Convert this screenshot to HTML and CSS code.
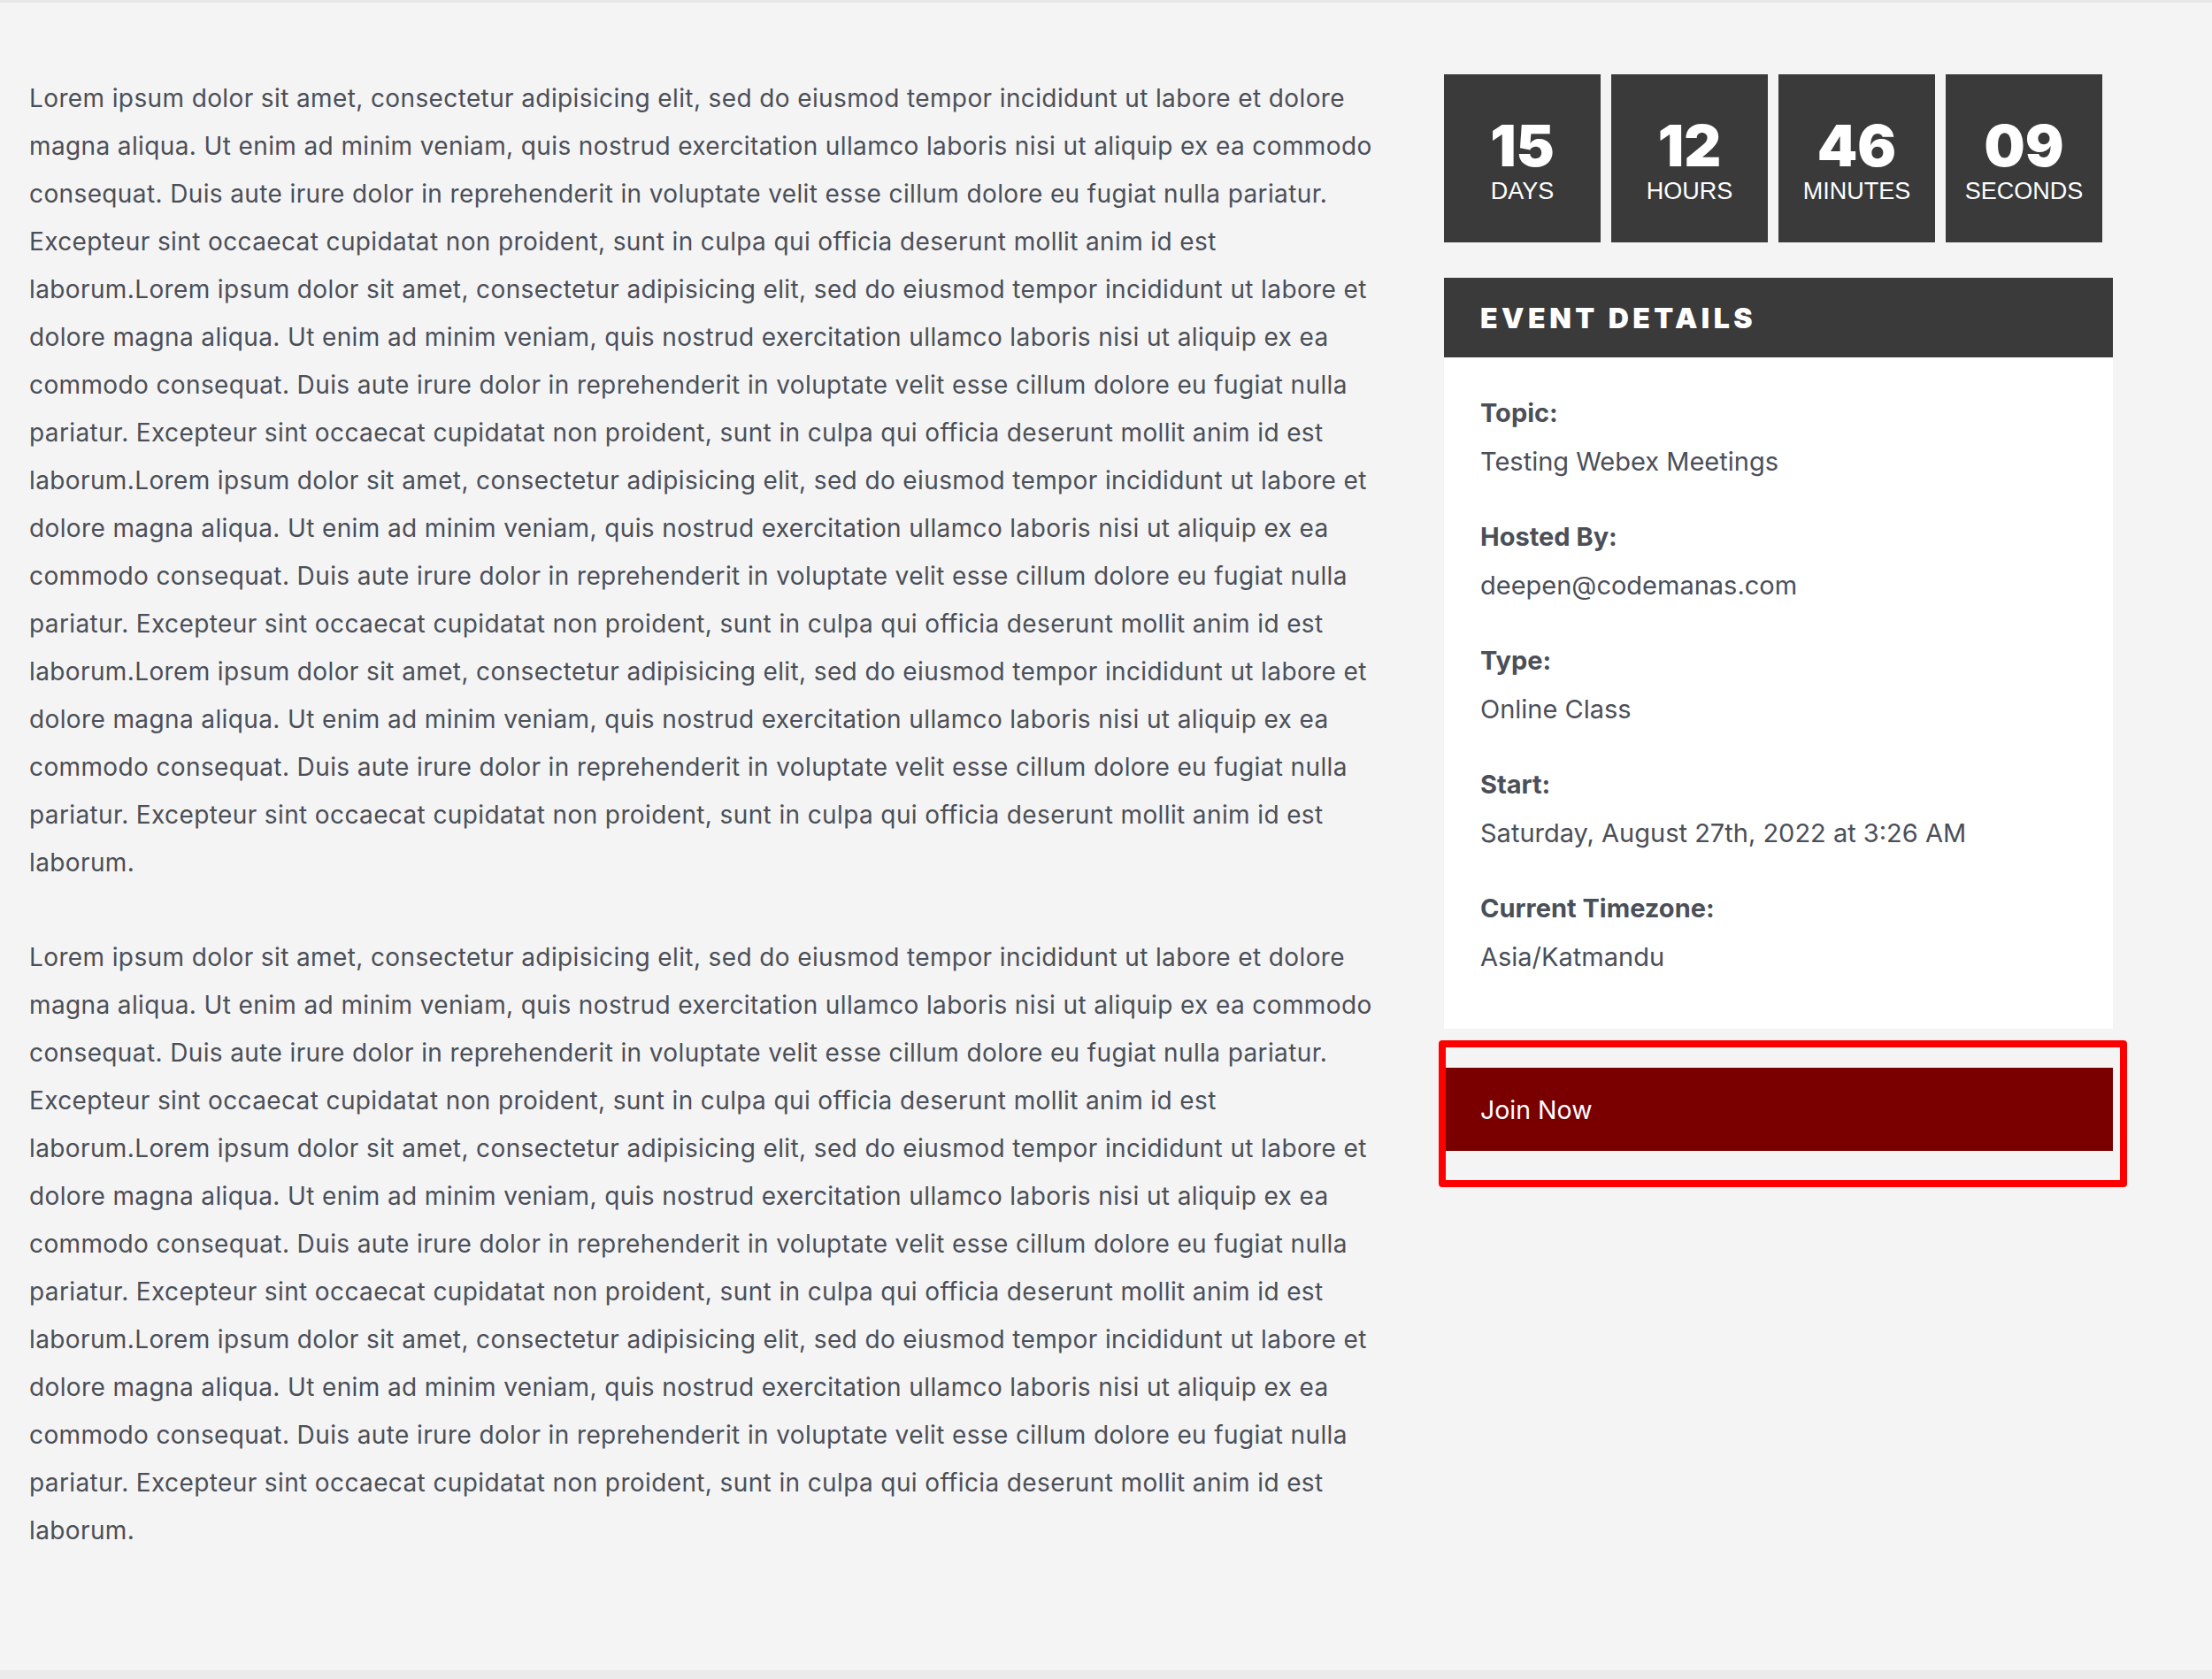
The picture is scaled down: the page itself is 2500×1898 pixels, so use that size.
FILE: index.html
```html
<!DOCTYPE html>
<html lang="en">
<head>
<meta charset="utf-8">
<title>Event</title>
<link rel="stylesheet" href="styles.css">
</head>
<body>
<div class="site">
  <main class="page">
    <article class="content">
      <p>Lorem ipsum dolor sit amet, consectetur adipisicing elit, sed do eiusmod tempor incididunt ut labore et dolore magna aliqua. Ut enim ad minim veniam, quis nostrud exercitation ullamco laboris nisi ut aliquip ex ea commodo consequat. Duis aute irure dolor in reprehenderit in voluptate velit esse cillum dolore eu fugiat nulla pariatur. Excepteur sint occaecat cupidatat non proident, sunt in culpa qui officia deserunt mollit anim id est laborum.Lorem ipsum dolor sit amet, consectetur adipisicing elit, sed do eiusmod tempor incididunt ut labore et dolore magna aliqua. Ut enim ad minim veniam, quis nostrud exercitation ullamco laboris nisi ut aliquip ex ea commodo consequat. Duis aute irure dolor in reprehenderit in voluptate velit esse cillum dolore eu fugiat nulla pariatur. Excepteur sint occaecat cupidatat non proident, sunt in culpa qui officia deserunt mollit anim id est laborum.Lorem ipsum dolor sit amet, consectetur adipisicing elit, sed do eiusmod tempor incididunt ut labore et dolore magna aliqua. Ut enim ad minim veniam, quis nostrud exercitation ullamco laboris nisi ut aliquip ex ea commodo consequat. Duis aute irure dolor in reprehenderit in voluptate velit esse cillum dolore eu fugiat nulla pariatur. Excepteur sint occaecat cupidatat non proident, sunt in culpa qui officia deserunt mollit anim id est laborum.Lorem ipsum dolor sit amet, consectetur adipisicing elit, sed do eiusmod tempor incididunt ut labore et dolore magna aliqua. Ut enim ad minim veniam, quis nostrud exercitation ullamco laboris nisi ut aliquip ex ea commodo consequat. Duis aute irure dolor in reprehenderit in voluptate velit esse cillum dolore eu fugiat nulla pariatur. Excepteur sint occaecat cupidatat non proident, sunt in culpa qui officia deserunt mollit anim id est laborum.</p>
      <p>Lorem ipsum dolor sit amet, consectetur adipisicing elit, sed do eiusmod tempor incididunt ut labore et dolore magna aliqua. Ut enim ad minim veniam, quis nostrud exercitation ullamco laboris nisi ut aliquip ex ea commodo consequat. Duis aute irure dolor in reprehenderit in voluptate velit esse cillum dolore eu fugiat nulla pariatur. Excepteur sint occaecat cupidatat non proident, sunt in culpa qui officia deserunt mollit anim id est laborum.Lorem ipsum dolor sit amet, consectetur adipisicing elit, sed do eiusmod tempor incididunt ut labore et dolore magna aliqua. Ut enim ad minim veniam, quis nostrud exercitation ullamco laboris nisi ut aliquip ex ea commodo consequat. Duis aute irure dolor in reprehenderit in voluptate velit esse cillum dolore eu fugiat nulla pariatur. Excepteur sint occaecat cupidatat non proident, sunt in culpa qui officia deserunt mollit anim id est laborum.Lorem ipsum dolor sit amet, consectetur adipisicing elit, sed do eiusmod tempor incididunt ut labore et dolore magna aliqua. Ut enim ad minim veniam, quis nostrud exercitation ullamco laboris nisi ut aliquip ex ea commodo consequat. Duis aute irure dolor in reprehenderit in voluptate velit esse cillum dolore eu fugiat nulla pariatur. Excepteur sint occaecat cupidatat non proident, sunt in culpa qui officia deserunt mollit anim id est laborum.</p>
    </article>
    <aside class="sidebar">
      <div class="countdown">
        <div class="cd-box"><span class="cd-num">15</span><span class="cd-label">DAYS</span></div>
        <div class="cd-box"><span class="cd-num">12</span><span class="cd-label">HOURS</span></div>
        <div class="cd-box"><span class="cd-num">46</span><span class="cd-label">MINUTES</span></div>
        <div class="cd-box"><span class="cd-num">09</span><span class="cd-label">SECONDS</span></div>
      </div>
      <section class="details">
        <h2 class="details-title">EVENT DETAILS</h2>
        <dl class="details-body">
          <div class="item"><dt>Topic:</dt><dd>Testing Webex Meetings</dd></div>
          <div class="item"><dt>Hosted By:</dt><dd>deepen@codemanas.com</dd></div>
          <div class="item"><dt>Type:</dt><dd>Online Class</dd></div>
          <div class="item"><dt>Start:</dt><dd>Saturday, August 27th, 2022 at 3:26 AM</dd></div>
          <div class="item"><dt>Current Timezone:</dt><dd>Asia/Katmandu</dd></div>
        </dl>
      </section>
      <div class="join-wrap">
        <a class="join-btn" href="#">Join Now</a>
        <span class="highlight"></span>
      </div>
    </aside>
  </main>
  <footer class="footer"></footer>
</div>
</body>
</html>
```
FILE: styles.css
```css
html, body {
  margin: 0;
  padding: 0;
}
body {
  background: #f4f4f4;
  color: #4b4f58;
  font-family: Inter, "Noto Sans", sans-serif;
}
.site {
  min-height: 1898px;
  display: flex;
  flex-direction: column;
  border-top: 3px solid #e6e6e6;
  box-sizing: border-box;
}
.page {
  flex: 1;
  display: flex;
  align-items: flex-start;
  gap: 72px;
  padding: 81px 112px 0 33px;
}
.content {
  width: 1527px;
  flex: none;
}
.content p {
  margin: 0 0 53px;
  font-size: 28px;
  letter-spacing: 0.38px;
  line-height: 54px;
}
.sidebar {
  width: 756px;
  flex: none;
}
.countdown {
  display: grid;
  grid-template-columns: repeat(4, 177px);
  gap: 12px;
}
.cd-box {
  background: #3a3a3a;
  height: 190px;
  display: flex;
  flex-direction: column;
  align-items: center;
  justify-content: center;
  color: #fff;
  padding-top: 10px;
  box-sizing: border-box;
}
.cd-num {
  font-family: Inter, sans-serif;
  font-weight: 900;
  font-size: 65px;
  line-height: 64px;
}
.cd-label {
  font-family: "Liberation Sans", Arial, sans-serif;
  font-size: 27px;
  line-height: 38px;
}
.details {
  margin-top: 40px;
}
.details-title {
  margin: 0;
  height: 90px;
  display: flex;
  align-items: center;
  padding-left: 41px;
  background: #3a3a3a;
  color: #fff;
  font-family: Inter, sans-serif;
  font-weight: 900;
  font-size: 32px;
  letter-spacing: 4.5px;
}
.details-body {
  margin: 0;
  background: #fff;
  padding: 35px 41px 24px;
}
.item {
  margin-bottom: 30px;
}
.item dt {
  font-weight: 700;
  font-size: 29px;
  line-height: 55px;
}
.item dd {
  margin: 0;
  font-size: 29px;
  line-height: 55px;
}
.join-wrap {
  position: relative;
  margin-top: 44px;
}
.join-btn {
  display: flex;
  align-items: center;
  height: 94px;
  padding-left: 41px;
  background: #7a0000;
  color: #fff;
  text-decoration: none;
  font-size: 28.5px;
}
.highlight {
  position: absolute;
  left: -6px;
  top: -31px;
  right: -16px;
  bottom: -41px;
  border: 8px solid #ff0000;
  border-radius: 4px;
  pointer-events: none;
}
.footer {
  height: 10px;
  background: #ebebeb;
}
```
